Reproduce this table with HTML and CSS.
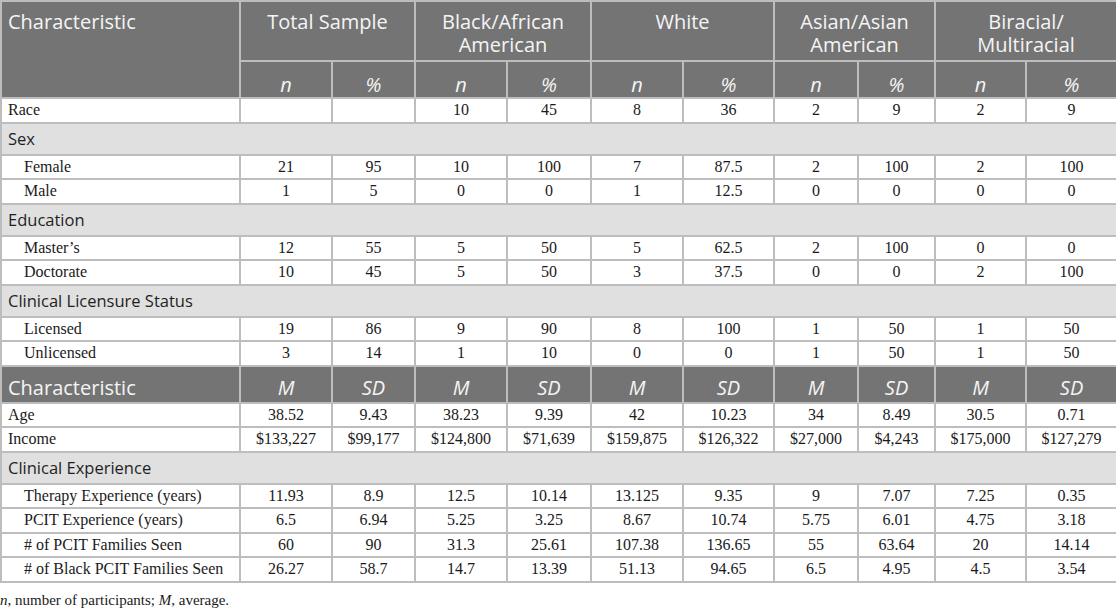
FILE: index.html
```html
<!DOCTYPE html>
<html>
<head>
<meta charset="utf-8">
<link rel="stylesheet" href="styles.css">
</head>
<body>
<table class="tbl">
  <colgroup>
    <col class="c0"><col class="c1"><col class="c2"><col class="c3"><col class="c4"><col class="c5"><col class="c6"><col class="c7"><col class="c8"><col class="c9"><col class="c10">
  </colgroup>
  <thead>
    <tr class="h1">
      <th class="left" rowspan="2">Characteristic</th>
      <th colspan="2">Total Sample</th>
      <th colspan="2"><span class="ln">Black/African</span><span class="ln">American</span></th>
      <th colspan="2">White</th>
      <th colspan="2"><span class="ln">Asian/Asian</span><span class="ln">American</span></th>
      <th colspan="2"><span class="ln">Biracial/</span><span class="ln">Multiracial</span></th>
    </tr>
    <tr class="h2">
      <th><i>n</i></th><th><i>%</i></th>
      <th><i>n</i></th><th><i>%</i></th>
      <th><i>n</i></th><th><i>%</i></th>
      <th><i>n</i></th><th><i>%</i></th>
      <th><i>n</i></th><th><i>%</i></th>
    </tr>
  </thead>
  <tbody>
    <tr class="d"><td class="lbl">Race</td><td></td><td></td><td>10</td><td>45</td><td>8</td><td>36</td><td>2</td><td>9</td><td>2</td><td>9</td></tr>
    <tr class="g"><td colspan="11">Sex</td></tr>
    <tr class="d"><td class="lbl sub">Female</td><td>21</td><td>95</td><td>10</td><td>100</td><td>7</td><td>87.5</td><td>2</td><td>100</td><td>2</td><td>100</td></tr>
    <tr class="d"><td class="lbl sub">Male</td><td>1</td><td>5</td><td>0</td><td>0</td><td>1</td><td>12.5</td><td>0</td><td>0</td><td>0</td><td>0</td></tr>
    <tr class="g"><td colspan="11">Education</td></tr>
    <tr class="d"><td class="lbl sub">Master’s</td><td>12</td><td>55</td><td>5</td><td>50</td><td>5</td><td>62.5</td><td>2</td><td>100</td><td>0</td><td>0</td></tr>
    <tr class="d"><td class="lbl sub">Doctorate</td><td>10</td><td>45</td><td>5</td><td>50</td><td>3</td><td>37.5</td><td>0</td><td>0</td><td>2</td><td>100</td></tr>
    <tr class="g"><td colspan="11">Clinical Licensure Status</td></tr>
    <tr class="d"><td class="lbl sub">Licensed</td><td>19</td><td>86</td><td>9</td><td>90</td><td>8</td><td>100</td><td>1</td><td>50</td><td>1</td><td>50</td></tr>
    <tr class="d"><td class="lbl sub">Unlicensed</td><td>3</td><td>14</td><td>1</td><td>10</td><td>0</td><td>0</td><td>1</td><td>50</td><td>1</td><td>50</td></tr>
    <tr class="h3">
      <th class="left">Characteristic</th>
      <th><i>M</i></th><th><i>SD</i></th>
      <th><i>M</i></th><th><i>SD</i></th>
      <th><i>M</i></th><th><i>SD</i></th>
      <th><i>M</i></th><th><i>SD</i></th>
      <th><i>M</i></th><th><i>SD</i></th>
    </tr>
    <tr class="d"><td class="lbl">Age</td><td>38.52</td><td>9.43</td><td>38.23</td><td>9.39</td><td>42</td><td>10.23</td><td>34</td><td>8.49</td><td>30.5</td><td>0.71</td></tr>
    <tr class="d"><td class="lbl">Income</td><td>$133,227</td><td>$99,177</td><td>$124,800</td><td>$71,639</td><td>$159,875</td><td>$126,322</td><td>$27,000</td><td>$4,243</td><td>$175,000</td><td>$127,279</td></tr>
    <tr class="g"><td colspan="11">Clinical Experience</td></tr>
    <tr class="d"><td class="lbl sub">Therapy Experience (years)</td><td>11.93</td><td>8.9</td><td>12.5</td><td>10.14</td><td>13.125</td><td>9.35</td><td>9</td><td>7.07</td><td>7.25</td><td>0.35</td></tr>
    <tr class="d"><td class="lbl sub">PCIT Experience (years)</td><td>6.5</td><td>6.94</td><td>5.25</td><td>3.25</td><td>8.67</td><td>10.74</td><td>5.75</td><td>6.01</td><td>4.75</td><td>3.18</td></tr>
    <tr class="d"><td class="lbl sub"># of PCIT Families Seen</td><td>60</td><td>90</td><td>31.3</td><td>25.61</td><td>107.38</td><td>136.65</td><td>55</td><td>63.64</td><td>20</td><td>14.14</td></tr>
    <tr class="d"><td class="lbl sub"># of Black PCIT Families Seen</td><td>26.27</td><td>58.7</td><td>14.7</td><td>13.39</td><td>51.13</td><td>94.65</td><td>6.5</td><td>4.95</td><td>4.5</td><td>3.54</td></tr>
  </tbody>
</table>
<p class="note"><i>n</i>, number of participants; <i>M</i>, average.</p>
</body>
</html>
```

FILE: styles.css
```css
html, body {
  margin: 0;
  padding: 0;
  background: #ffffff;
}
body {
  font-family: "Liberation Serif", "Times New Roman", serif;
  color: #1a1a1a;
}
.tbl {
  width: 1116px;
  table-layout: fixed;
  border-collapse: collapse;
  border: 2px solid #bdbdbd;
}
.c0 { width: 239px; }
.c1 { width: 92px; }
.c2 { width: 83px; }
.c3 { width: 92px; }
.c4 { width: 84px; }
.c5 { width: 92px; }
.c6 { width: 91px; }
.c7 { width: 84px; }
.c8 { width: 77px; }
.c9 { width: 91px; }
.c10 { width: 91px; }
.tbl th, .tbl td {
  border: 2px solid #bdbdbd;
  padding: 0 6px;
  overflow: hidden;
  white-space: nowrap;
}
.tbl th {
  background: #747474;
  color: #f4f4f4;
  font-family: "Open Sans", "Noto Sans", sans-serif;
  font-weight: 400;
  font-size: 20px;
  line-height: 23px;
  text-align: center;
}
.tbl th.left {
  text-align: left;
  padding-left: 6px;
}
.tbl th i {
  font-style: italic;
}
.ln {
  display: block;
  height: 23px;
  line-height: 23px;
}
.h1 { height: 60px; }
.h1 th {
  vertical-align: top;
  padding-top: 8px;
}
.h2 { height: 37px; }
.h2 th { vertical-align: middle; padding-top: 9px; }
.h3 { height: 37px; }
.h3 th { vertical-align: middle; padding-top: 6px; }
.d { height: 24.5px; }
.d td {
  font-size: 16px;
  line-height: 18px;
  text-align: center;
  vertical-align: middle;
  padding-top: 0;
  padding-bottom: 0;
}
.d td.lbl {
  text-align: left;
  padding-left: 6px;
}
.d td.sub {
  padding-left: 22px;
}
.g { height: 32px; }
.g td {
  background: #e0e0e0;
  font-family: "Open Sans", "Noto Sans", sans-serif;
  font-size: 16.5px;
  line-height: 22px;
  color: #1f1f1f;
  padding-left: 6px;
  vertical-align: middle;
}
.note {
  margin: 8px 0 0 0;
  font-size: 15px;
  line-height: 18px;
  color: #1a1a1a;
}
```
